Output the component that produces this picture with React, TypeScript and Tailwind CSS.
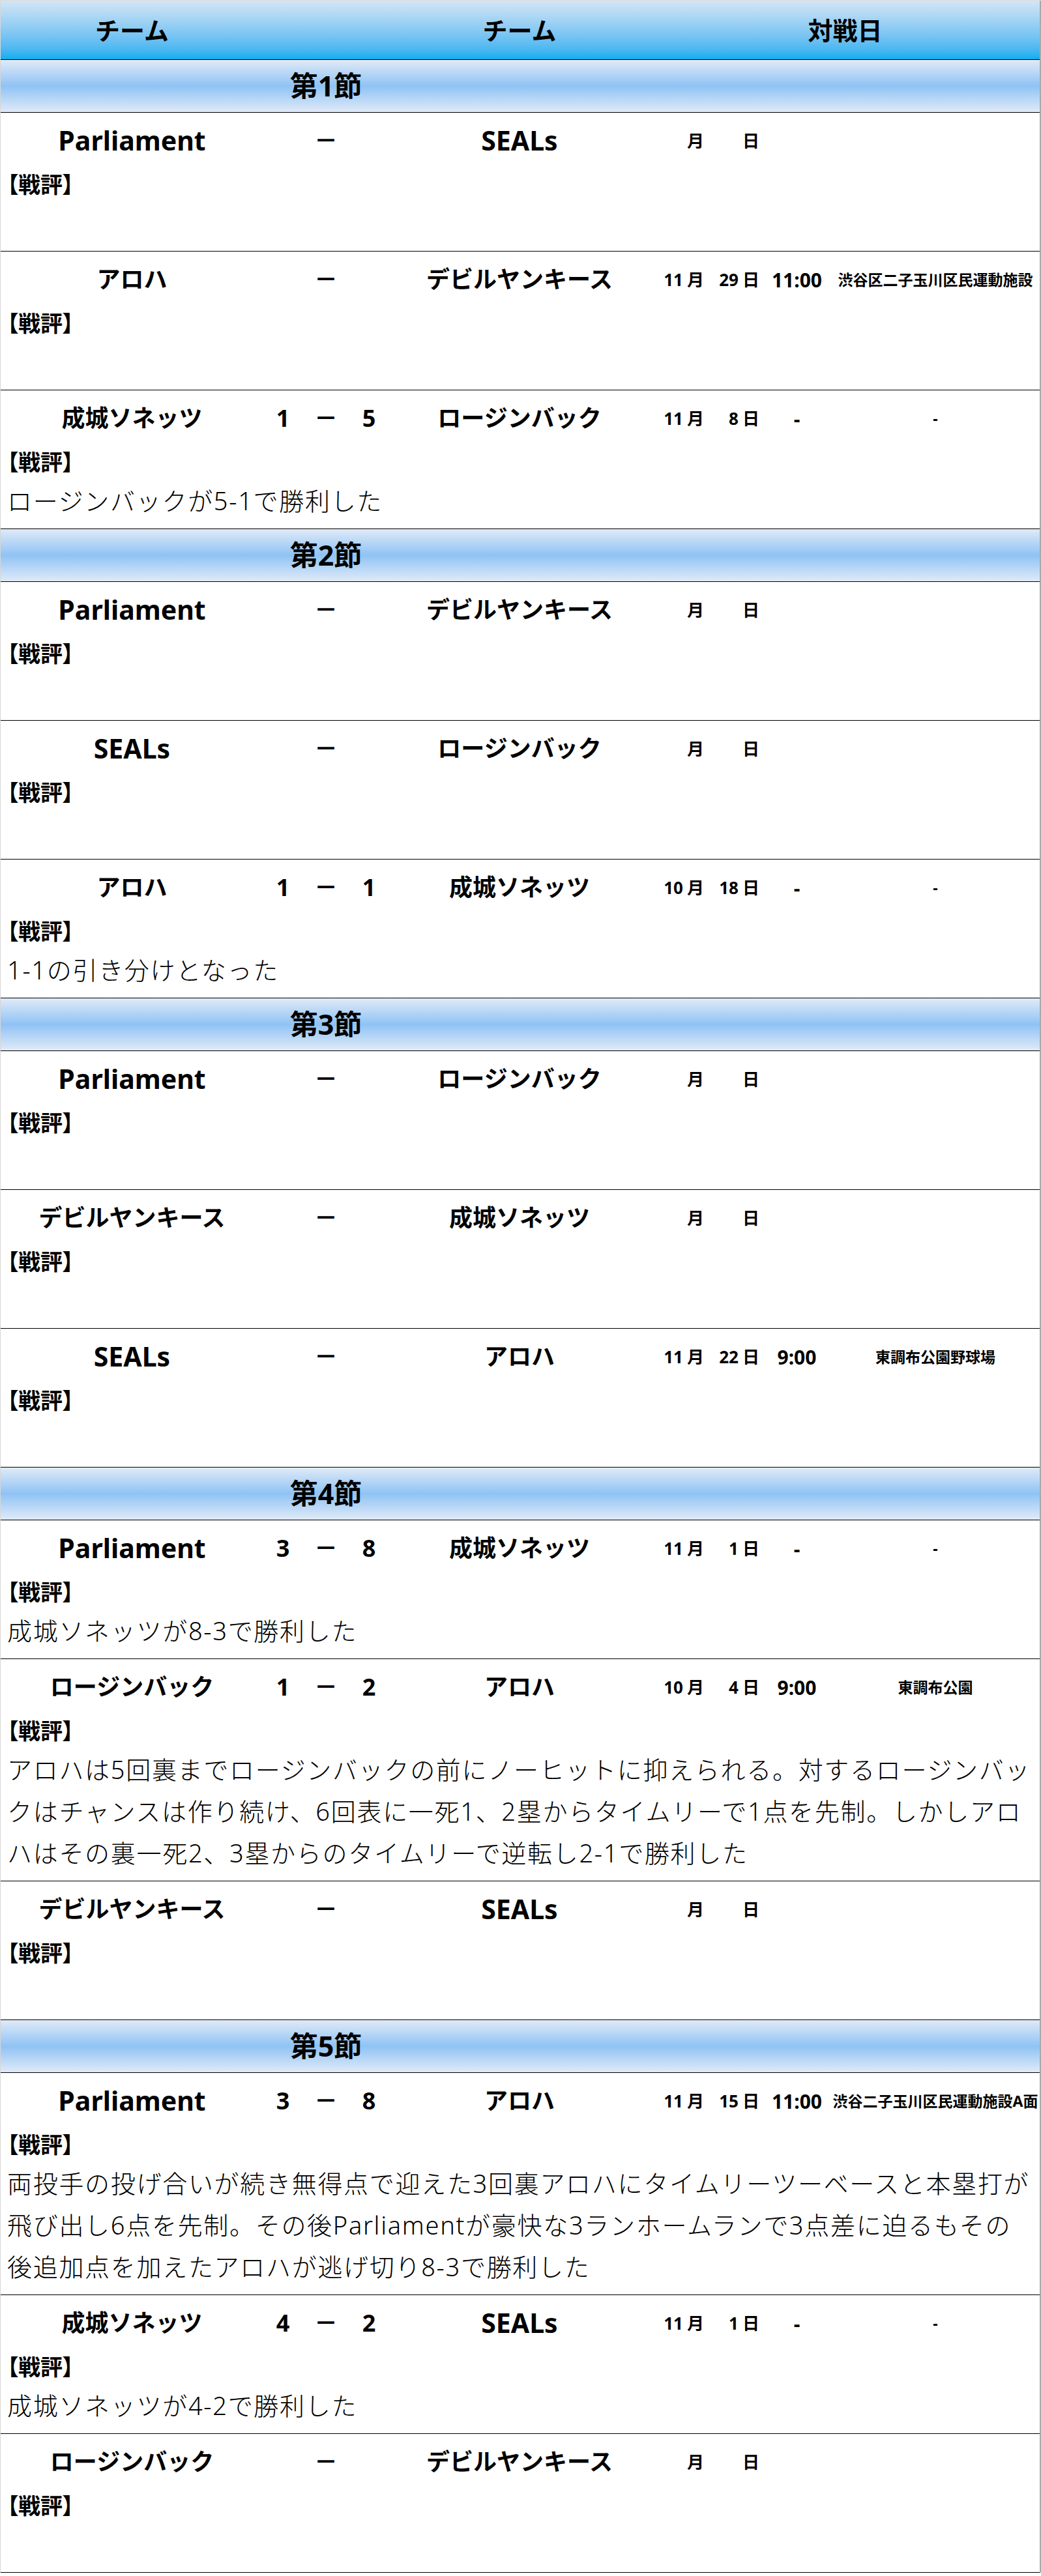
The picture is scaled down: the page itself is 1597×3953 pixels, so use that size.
import React from "react";

type Match = {
  home: string;
  away: string;
  homeScore?: string;
  awayScore?: string;
  month?: string;
  day?: string;
  time?: string;
  venue?: string;
  comment?: string;
};

const rounds: { title: string; matches: Match[] }[] = [
  {
    title: "第1節",
    matches: [
      { home: "Parliament", away: "SEALs" },
      { home: "アロハ", away: "デビルヤンキース", month: "11", day: "29", time: "11:00", venue: "渋谷区二子玉川区民運動施設" },
      { home: "成城ソネッツ", away: "ロージンバック", homeScore: "1", awayScore: "5", month: "11", day: "8", time: "-", venue: "-", comment: "ロージンバックが5-1で勝利した" },
    ],
  },
  {
    title: "第2節",
    matches: [
      { home: "Parliament", away: "デビルヤンキース" },
      { home: "SEALs", away: "ロージンバック" },
      { home: "アロハ", away: "成城ソネッツ", homeScore: "1", awayScore: "1", month: "10", day: "18", time: "-", venue: "-", comment: "1-1の引き分けとなった" },
    ],
  },
  {
    title: "第3節",
    matches: [
      { home: "Parliament", away: "ロージンバック" },
      { home: "デビルヤンキース", away: "成城ソネッツ" },
      { home: "SEALs", away: "アロハ", month: "11", day: "22", time: "9:00", venue: "東調布公園野球場" },
    ],
  },
  {
    title: "第4節",
    matches: [
      { home: "Parliament", away: "成城ソネッツ", homeScore: "3", awayScore: "8", month: "11", day: "1", time: "-", venue: "-", comment: "成城ソネッツが8-3で勝利した" },
      {
        home: "ロージンバック",
        away: "アロハ",
        homeScore: "1",
        awayScore: "2",
        month: "10",
        day: "4",
        time: "9:00",
        venue: "東調布公園",
        comment:
          "アロハは5回裏までロージンバックの前にノーヒットに抑えられる。対するロージンバックはチャンスは作り続け、6回表に一死1、2塁からタイムリーで1点を先制。しかしアロハはその裏一死2、3塁からのタイムリーで逆転し2-1で勝利した",
      },
      { home: "デビルヤンキース", away: "SEALs" },
    ],
  },
  {
    title: "第5節",
    matches: [
      {
        home: "Parliament",
        away: "アロハ",
        homeScore: "3",
        awayScore: "8",
        month: "11",
        day: "15",
        time: "11:00",
        venue: "渋谷二子玉川区民運動施設A面",
        comment:
          "両投手の投げ合いが続き無得点で迎えた3回裏アロハにタイムリーツーベースと本塁打が飛び出し6点を先制。その後Parliamentが豪快な3ランホームランで3点差に迫るもその後追加点を加えたアロハが逃げ切り8-3で勝利した",
      },
      { home: "成城ソネッツ", away: "SEALs", homeScore: "4", awayScore: "2", month: "11", day: "1", time: "-", venue: "-", comment: "成城ソネッツが4-2で勝利した" },
      { home: "ロージンバック", away: "デビルヤンキース" },
    ],
  },
];

// latin team names sit a bit larger than the kana ones
const Team = ({ name }: { name: string }) => (
  <div className={/^[A-Za-z]/.test(name) ? "text-center text-[41px]" : "text-center text-[36px]"}>{name}</div>
);

const MatchRow = ({ m }: { m: Match }) => (
  <div className="border-b border-black pt-[10px] pb-[11px]">
    <div className="grid grid-cols-[403px_192px_402px_1fr] h-[66px] items-center font-bold">
      <Team name={m.home} />
      <div className="flex justify-center items-center gap-[22px] text-[36px]">
        {m.homeScore && <span className="w-[44px] text-center">{m.homeScore}</span>}
        <span className="w-[44px] text-center">－</span>
        {m.awayScore && <span className="w-[44px] text-center">{m.awayScore}</span>}
      </div>
      <Team name={m.away} />
      <div className="flex items-center h-full">
        <div className="w-[90px] flex justify-end items-center gap-[6px] pr-[8px] text-[26px]">
          {m.month && <span>{m.month}</span>}
          <span>月</span>
        </div>
        <div className="w-[82px] flex justify-end items-center gap-[6px] pr-[5px] text-[26px]">
          {m.day && <span>{m.day}</span>}
          <span>日</span>
        </div>
        <div className="w-[105px] text-center text-[30px]">{m.time}</div>
        <div className="flex-1 text-center text-[23px] whitespace-nowrap">{m.venue}</div>
      </div>
    </div>
    <div className="mt-[7px] px-[10px] text-[34px] leading-[54px] font-bold [font-feature-settings:'palt']">【戦評】</div>
    <p className="px-[10px] min-h-[64px] text-[38px] leading-[64px] tracking-[1.7px] font-light text-black">
      {m.comment}
    </p>
  </div>
);

export default function App() {
  return (
    <div className="w-[1597px] bg-white text-black font-['Noto_Sans','Noto_Sans_CJK_JP',sans-serif] border-t border-[#dcdcdc]">
      <div className="border-l border-[#d6d6d6] border-r-2 border-r-[#a9a9a9]">
        <div className="grid grid-cols-[403px_192px_402px_1fr] h-[91px] items-center border-b border-black bg-linear-to-b from-[#d3e5f5] to-[#04adef] text-[38px] font-bold">
          <div className="text-center">チーム</div>
          <div />
          <div className="text-center">チーム</div>
          <div className="text-center">対戦日</div>
        </div>
        {rounds.map((r) => (
          <div key={r.title}>
            <div className="grid grid-cols-[403px_192px_402px_1fr] h-[81px] items-center border-b border-black bg-linear-to-b from-[#e0eaf7] via-[#8fc3f4] to-[#e0eaf7]">
              <div />
              <div className="text-center text-[43px] font-bold">{r.title}</div>
            </div>
            {r.matches.map((m, i) => (
              <MatchRow key={i} m={m} />
            ))}
          </div>
        ))}
      </div>
    </div>
  );
}
